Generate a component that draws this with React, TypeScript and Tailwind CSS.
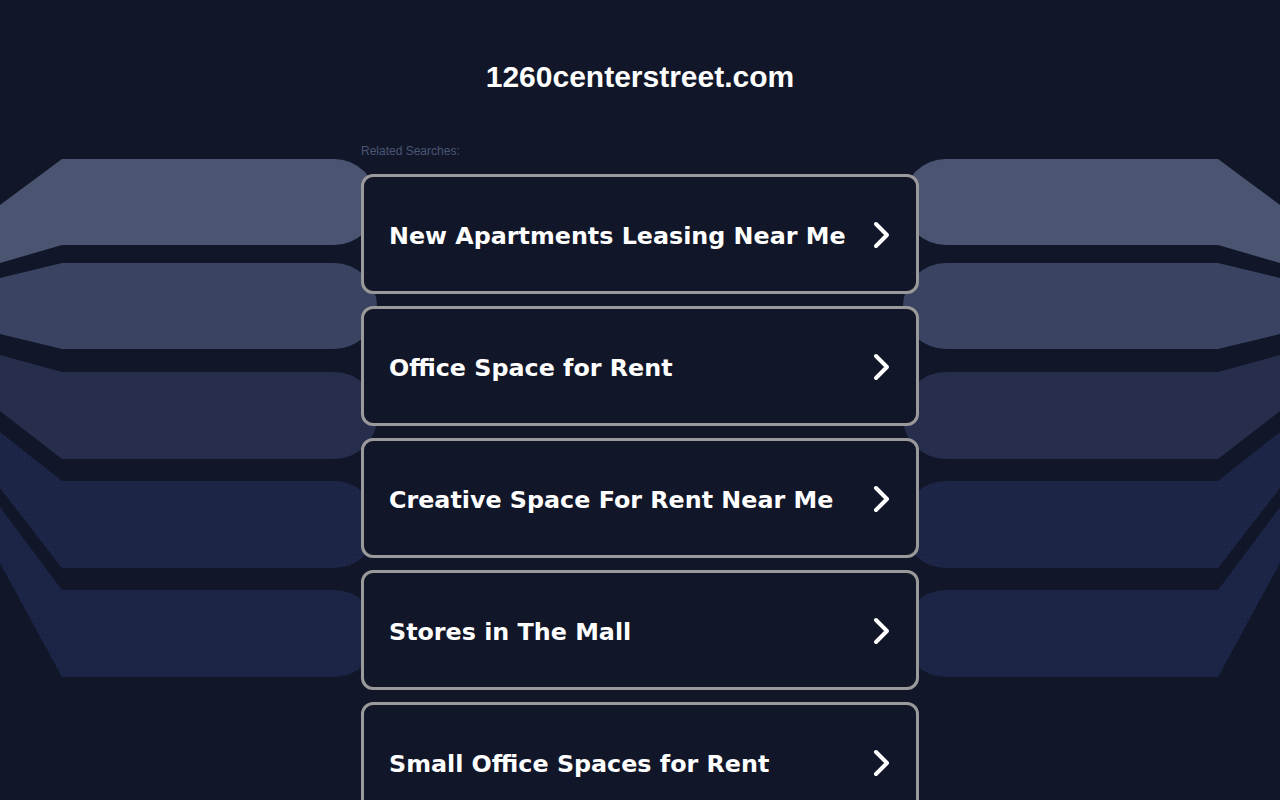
import React from 'react';

const searches = [
  'New Apartments Leasing Near Me',
  'Office Space for Rent',
  'Creative Space For Rent Near Me',
  'Stores in The Mall',
  'Small Office Spaces for Rent',
];

// left-side bands: [left edge top, top, bottom, left edge bottom]
const bands: [number, number, number, number, string][] = [
  [205, 159, 245, 263, '#4b5572'],
  [278, 263, 349, 334, '#3a4361'],
  [355, 372, 459, 411, '#262e4c'],
  [432, 481, 568, 488, '#1d2546'],
  [507, 590, 677, 563, '#1b2445'],
];

const bandPath = (b: [number, number, number, number, string], mirror: boolean) => {
  const [tl, t, bt, bl] = b;
  const r = (bt - t) / 2;
  const x = (v: number) => (mirror ? 1280 - v : v);
  const sweep = mirror ? 0 : 1;
  return `M${x(0)},${tl} L${x(62)},${t} L${x(334)},${t} A${r},${r} 0 0 ${sweep} ${x(334)},${bt} L${x(62)},${bt} L${x(0)},${bl} Z`;
};

const Background = () => (
  <svg className="absolute inset-0" width="1280" height="800" viewBox="0 0 1280 800">
    <defs>
      <pattern id="dots" width="4" height="4" patternUnits="userSpaceOnUse">
        <circle cx="1" cy="1" r="0.5" fill="#243058" />
      </pattern>
    </defs>
    {bands.map((b, i) => (
      <g key={i}>
        <path d={bandPath(b, false)} fill={b[4]} />
        <path d={bandPath(b, true)} fill={b[4]} />
        {i >= 3 && (
          <>
            <path d={bandPath(b, false)} fill="url(#dots)" />
            <path d={bandPath(b, true)} fill="url(#dots)" />
          </>
        )}
      </g>
    ))}
  </svg>
);

const Chevron = () => (
  <svg width="20" height="28" viewBox="0 0 20 28" className="mt-[2px] shrink-0">
    <polyline
      points="4,3 15,14 4,25"
      fill="none"
      stroke="#ffffff"
      strokeWidth="4"
      strokeLinecap="round"
      strokeLinejoin="round"
    />
  </svg>
);

export default function App() {
  return (
    <div className="relative min-h-[800px] w-full overflow-hidden bg-[#111729]">
      <Background />
      <div className="relative flex flex-col items-center">
        <h1 className="mt-[59px] text-[30px] leading-[36px] font-bold text-white font-['Liberation_Sans',Arial,sans-serif]">
          1260centerstreet.com
        </h1>
        <div className="mt-[48px] w-[558px]">
          <div className="text-[12px] leading-[16px] text-[#4b5675] font-['Liberation_Sans',Arial,sans-serif]">
            Related Searches:
          </div>
          <div className="mt-[15px] flex flex-col gap-[12px]">
            {searches.map((s) => (
              <a
                key={s}
                href="#"
                className="flex h-[120px] items-center justify-between rounded-[12px] border-[3px] border-[#9a9a9a] bg-[#111729] pl-[25px] pr-[24px]"
              >
                <span className="pt-[6px] text-[23.8px] font-bold text-white font-['DejaVu_Sans',Verdana,sans-serif]">
                  {s}
                </span>
                <Chevron />
              </a>
            ))}
          </div>
        </div>
      </div>
    </div>
  );
}
